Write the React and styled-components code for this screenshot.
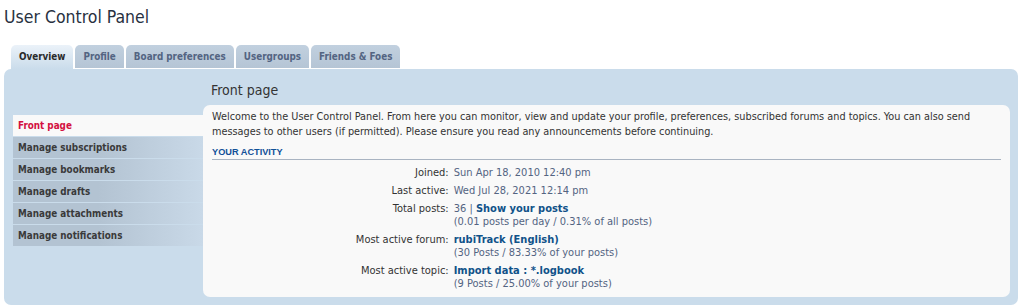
import React from "react";
import styled, { createGlobalStyle, css } from "styled-components";

const GlobalStyle = createGlobalStyle`
  html, body {
    margin: 0;
    padding: 0;
    background: #ffffff;
  }
  body {
    font-family: "DejaVu Sans Condensed", "DejaVu Sans", Verdana, sans-serif;
    font-stretch: condensed;
    font-size: 11px;
    color: #333333;
  }
`;

const Page = styled.div`
  padding: 0 6px 0 4px;
`;

const Title = styled.h1`
  margin: 7px 0 0 0;
  font-size: 17.5px;
  line-height: 20px;
  font-weight: normal;
  color: #28313f;
`;

const TabBar = styled.ul`
  list-style: none;
  margin: 18px 0 0 7px;
  padding: 0;
  height: 24px;
  display: flex;
  align-items: flex-end;
  gap: 2px;
`;

const Tab = styled.li`
  height: 23px;
  margin-bottom: 1px;
  padding: 0 8px;
  border-radius: 5px 5px 0 0;
  background: linear-gradient(to bottom, #c1d0df 0%, #b5c5d5 100%);
  color: #536482;
  font-weight: bold;
  font-size: 9.8px;
  line-height: 23px;
  white-space: nowrap;
  ${(p) =>
    p.$active &&
    css`
      height: 24px;
      margin-bottom: 0;
      background: linear-gradient(to bottom, #ebf2f9 0%, #cadceb 100%);
      color: #2a2a2a;
    `}
`;

const Panel = styled.div`
  display: flex;
  background: #cadceb;
  border-radius: 7px;
  padding: 0 8px 8px 9px;
`;

const Sidebar = styled.ul`
  list-style: none;
  margin: 46px 0 0 0;
  padding: 0;
  width: 190px;
  flex-shrink: 0;
`;

const NavItem = styled.li`
  height: 21px;
  line-height: 21px;
  margin-bottom: 1px;
  padding-left: 5px;
  font-size: 9.8px;
  font-weight: bold;
  color: #3a3a3a;
  background: linear-gradient(to right, #b3c3d2 45%, #c9d9e8 100%);
  ${(p) =>
    p.$active &&
    css`
      background: #f9f9f9;
      color: #d31141;
    `}
`;

const Main = styled.div`
  flex: 1;
  display: flex;
  flex-direction: column;
  min-width: 0;
`;

const PanelHeading = styled.h2`
  margin: 13px 0 6px 8px;
  font-size: 14px;
  line-height: 17px;
  font-weight: normal;
  color: #333333;
`;

const ContentBox = styled.div`
  background: #f9f9f9;
  border-radius: 7px;
  padding: 4px 9px 7px 9px;
`;

const Intro = styled.p`
  margin: 0;
  font-size: 10.8px;
  line-height: 15px;
  color: #333333;
`;

const SectionTitle = styled.h3`
  margin: 7px 0 0 0;
  padding-bottom: 1px;
  border-bottom: 1px solid #a9b4c2;
  font-family: "Liberation Sans", Arial, sans-serif;
  font-stretch: normal;
  font-size: 9.2px;
  line-height: 12px;
  font-weight: bold;
  text-transform: uppercase;
  color: #115098;
`;

const Details = styled.dl`
  margin: 6px 0 0 0;
  display: grid;
  grid-template-columns: 30% 1fr;
  column-gap: 5px;
  row-gap: 5px;
  line-height: 13px;
`;

const Term = styled.dt`
  text-align: right;
  color: #333333;
`;

const Desc = styled.dd`
  margin: 0;
  color: #536482;
`;

const Link = styled.a`
  color: #105289;
  font-weight: bold;
  text-decoration: none;
`;

const tabs = ["Overview", "Profile", "Board preferences", "Usergroups", "Friends & Foes"];
const nav = [
  "Front page",
  "Manage subscriptions",
  "Manage bookmarks",
  "Manage drafts",
  "Manage attachments",
  "Manage notifications",
];

export default function App() {
  return (
    <>
      <GlobalStyle />
      <Page>
        <Title>User Control Panel</Title>
        <TabBar>
          {tabs.map((t, i) => (
            <Tab key={t} $active={i === 0}>
              {t}
            </Tab>
          ))}
        </TabBar>
        <Panel>
          <Sidebar>
            {nav.map((n, i) => (
              <NavItem key={n} $active={i === 0}>
                {n}
              </NavItem>
            ))}
          </Sidebar>
          <Main>
            <PanelHeading>Front page</PanelHeading>
            <ContentBox>
              <Intro>
                Welcome to the User Control Panel. From here you can monitor, view and update your
                profile, preferences, subscribed forums and topics. You can also send messages to
                other users (if permitted). Please ensure you read any announcements before
                continuing.
              </Intro>
              <SectionTitle>Your activity</SectionTitle>
              <Details>
                <Term>Joined:</Term>
                <Desc>Sun Apr 18, 2010 12:40 pm</Desc>
                <Term>Last active:</Term>
                <Desc>Wed Jul 28, 2021 12:14 pm</Desc>
                <Term>Total posts:</Term>
                <Desc>
                  36 | <Link href="#">Show your posts</Link>
                  <br />
                  (0.01 posts per day / 0.31% of all posts)
                </Desc>
                <Term>Most active forum:</Term>
                <Desc>
                  <Link href="#">rubiTrack (English)</Link>
                  <br />
                  (30 Posts / 83.33% of your posts)
                </Desc>
                <Term>Most active topic:</Term>
                <Desc>
                  <Link href="#">Import data : *.logbook</Link>
                  <br />
                  (9 Posts / 25.00% of your posts)
                </Desc>
              </Details>
            </ContentBox>
          </Main>
        </Panel>
      </Page>
    </>
  );
}
